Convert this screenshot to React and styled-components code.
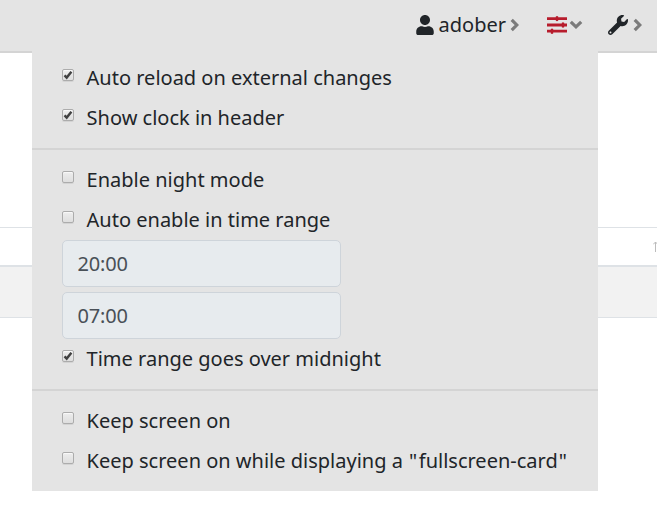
import React from "react";
import styled, { createGlobalStyle } from "styled-components";
import { FaUser, FaWrench } from "react-icons/fa";

const GlobalStyle = createGlobalStyle`
  *, *::before, *::after { box-sizing: border-box; }
  body {
    margin: 0;
    overflow: hidden;
    background: #fff;
    color: #212529;
    font: 20px/30px "Noto Sans", sans-serif;
  }
`;

const Page = styled.div`
  position: relative;
  width: 657px;
  height: 512px;
  overflow: hidden;
`;

const Header = styled.header`
  display: flex;
  align-items: center;
  justify-content: flex-end;
  height: 53px;
  padding: 0 15px 2px 0;
  background: #e4e4e4;
  border-bottom: 2px solid #d4d4d4;
`;

const NavItem = styled.a`
  display: flex;
  align-items: center;
  height: 30px;
  margin-left: ${(p) => p.$space || 0}px;
  color: #212529;
`;

const NavLabel = styled.span`
  margin: 0 4px 0 4px;
`;

const Caret = styled.span`
  display: flex;
  align-items: center;
  justify-content: center;
  width: ${(p) => p.$width}px;
  margin-left: ${(p) => p.$gap || 0}px;
  color: #7b7b7b;
`;

const TableArea = styled.main`
  padding-top: 174px;
`;

const TableHead = styled.div`
  display: flex;
  align-items: center;
  justify-content: flex-end;
  height: 40px;
  border-top: 1px solid #dee2e6;
  border-bottom: 2px solid #dee2e6;
`;

const SortMark = styled.svg`
  display: block;
  flex: none;
  width: 4px;
  height: 12px;
`;

const TableRow = styled.div`
  height: 51px;
  background: #f2f2f2;
  border-bottom: 1px solid #dee2e6;
`;

const Menu = styled.section`
  position: absolute;
  top: 51px;
  left: 32px;
  width: 566px;
  height: 440px;
  background: #e4e4e4;
`;

const Group = styled.div`
  height: ${(p) => p.$height}px;
  padding: ${(p) => p.$top}px 0 0 30px;
  border-top: ${(p) => (p.$divided ? "2px solid #d4d4d4" : "0")};
`;

const Option = styled.label`
  display: flex;
  height: ${(p) => p.$height || 40}px;
  white-space: nowrap;
`;

const Box = styled.span`
  display: flex;
  align-items: center;
  justify-content: center;
  flex: none;
  width: 12px;
  height: 12px;
  margin: 6px 12.6px 0 0;
  border: 1px solid #acacac;
  border-radius: 2px;
  background: linear-gradient(#ededed, #dedede);
  box-shadow: 0 1px 0 rgba(0, 0, 0, 0.07), inset 0 1px 1px rgba(255, 255, 255, 0.7);
`;

const TimeInput = styled.input`
  display: block;
  width: 279px;
  height: 47px;
  margin: 0 0 5px;
  padding: 0 14.5px;
  border: 1px solid #ced4da;
  border-radius: 5px;
  background: #e7ebee;
  color: #495057;
  font: inherit;
  letter-spacing: -0.2px;
  outline: 0;
`;

const Quote = styled.span`
  margin-left: 1px;
  letter-spacing: 1.5px;
`;

const SlidersIcon = () => (
  <svg width="20" height="18" viewBox="0 0 20 18" fill="#b71c2c">
    <path d="M0 1.2h20v2.8H0zM0 7.6h20v2.8H0zM0 13.8h20v2.8H0z" />
    <path d="M8.8 .4 10 0l1.2 .4v4.4L10 5.3l-1.2-.5zM14.8 6.8l1.2-.5 1.2 .5v4.4l-1.2 .5-1.2-.5zM3.8 13l1.2-.5 1.2 .5v4.4l-1.2 .5-1.2-.5z" />
  </svg>
);

const ChevronRight = () => (
  <svg width="9" height="14" viewBox="0 0 9 14">
    <path d="M1.7 1.8 6.8 7 1.7 12.2" fill="none" stroke="currentColor" strokeWidth="3.2" />
  </svg>
);

const ChevronDown = () => (
  <svg width="14" height="9" viewBox="0 0 14 9">
    <path d="M1.8 1.8 7 6.8 12.2 1.8" fill="none" stroke="currentColor" strokeWidth="3.2" />
  </svg>
);

const Check = () => (
  <svg width="10" height="10" viewBox="0 0 10 10">
    <path d="M1.5 5.3 3.7 7.6 8.4 1.7" fill="none" stroke="#404040" strokeWidth="2.4" />
  </svg>
);

const CheckOption = ({ label, checked, height }) => (
  <Option $height={height}>
    <Box role="checkbox" aria-checked={!!checked}>{checked && <Check />}</Box>
    {label}
  </Option>
);

export default function App() {
  return (
    <Page>
      <GlobalStyle />
      <Header>
        <NavItem>
          <FaUser size={20} />
          <NavLabel>adober</NavLabel>
          <Caret $width={9}><ChevronRight /></Caret>
        </NavItem>
        <NavItem $space={28}>
          <SlidersIcon />
          <Caret $width={14} $gap={2}><ChevronDown /></Caret>
        </NavItem>
        <NavItem $space={25}>
          <FaWrench size={20} />
          <Caret $width={9} $gap={5}><ChevronRight /></Caret>
        </NavItem>
      </Header>
      <TableArea>
        <TableHead>
          <SortMark viewBox="0 0 4 12">
            <path d="M2.5 1v10M.2 3.4 2.5 1 4.8 3.4" fill="none" stroke="#bcbcbc" />
          </SortMark>
        </TableHead>
        <TableRow />
      </TableArea>
      <Menu>
        <Group $height={97} $top={12}>
          <CheckOption label="Auto reload on external changes" checked />
          <CheckOption label="Show clock in header" checked />
        </Group>
        <Group $height={241} $top={15} $divided>
          <CheckOption label="Enable night mode" />
          <CheckOption label="Auto enable in time range" height={35} />
          <TimeInput defaultValue="20:00" />
          <TimeInput defaultValue="07:00" />
          <CheckOption label="Time range goes over midnight" checked />
        </Group>
        <Group $height={102} $top={15} $divided>
          <CheckOption label="Keep screen on" />
          <CheckOption
            label={
              <span>
                Keep screen on while displaying a <Quote>"</Quote>fullscreen-card<Quote>"</Quote>
              </span>
            }
          />
        </Group>
      </Menu>
    </Page>
  );
}
